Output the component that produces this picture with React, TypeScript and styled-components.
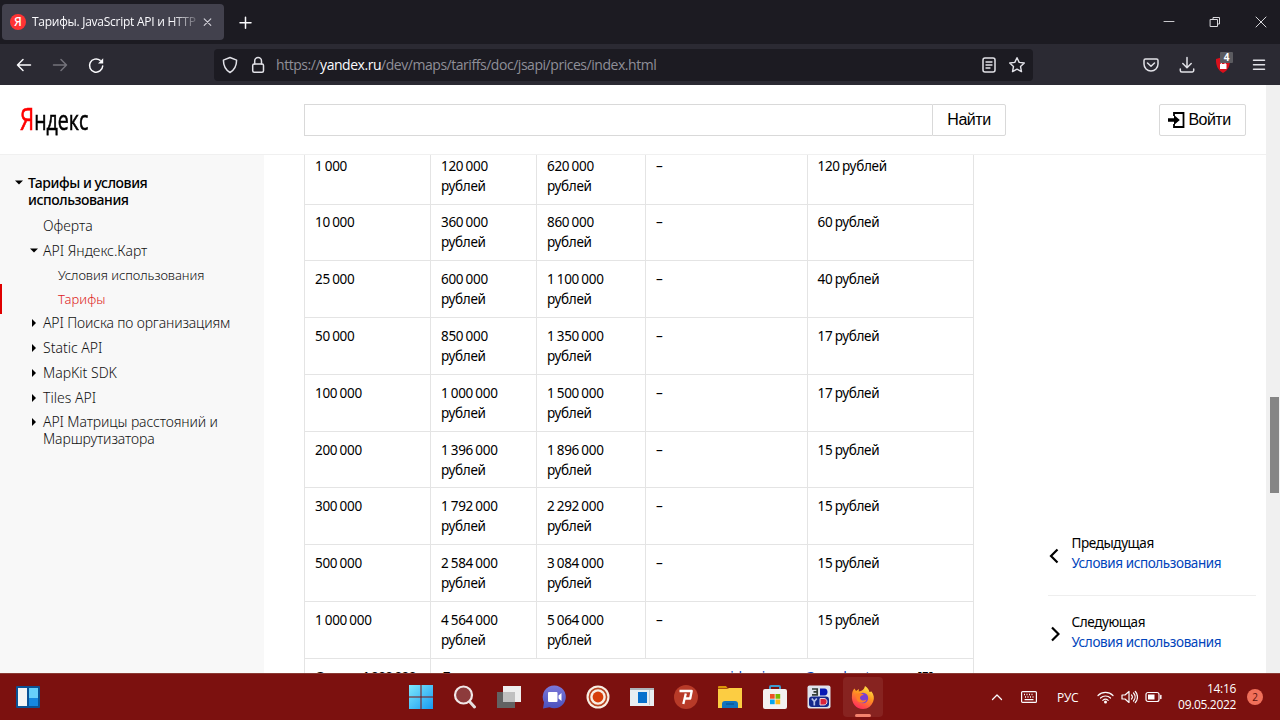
import React from 'react';
import styled, { createGlobalStyle } from 'styled-components';

const Global = createGlobalStyle`
  * { box-sizing: border-box; }
  body { margin: 0; overflow: hidden; background: #fff; font-family: "Noto Sans", "Open Sans", sans-serif; }
  svg { display: block; flex: none; }
`;

const Screen = styled.div`
  width: 1280px;
  height: 720px;
  display: flex;
  flex-direction: column;
  overflow: hidden;
`;

/* Browser chrome */
const TabStrip = styled.div`
  height: 44px;
  flex: none;
  background: #1c1b22;
  display: flex;
  align-items: center;
  padding-left: 2px;
  color: #fbfbfe;
`;
const Tab = styled.div`
  width: 222px;
  height: 36px;
  border-radius: 4px;
  background: #42414d;
  display: flex;
  align-items: center;
  padding: 0 10px 0 8px;
`;
const Favicon = styled.div`
  width: 16px;
  height: 16px;
  border-radius: 50%;
  background: #f33;
  color: #fff;
  font: 500 12px/16px "Noto Sans", sans-serif;
  text-align: center;
  flex: none;
`;
const TabTitle = styled.div`
  width: 166px;
  margin: 0 4px 0 6px;
  overflow: hidden;
  white-space: nowrap;
  font: 400 12px/18px "Open Sans", sans-serif;
  letter-spacing: -0.26px;
  mask-image: linear-gradient(to right, #000 84%, rgba(0, 0, 0, 0.15) 100%);
`;
const NewTab = styled.div`
  margin-left: 15px;
`;
const WindowButtons = styled.div`
  margin-left: auto;
  display: flex;
  gap: 34px;
  padding-right: 13px;
`;
const NavBar = styled.div`
  height: 41px;
  flex: none;
  background: #2b2a33;
  display: flex;
  align-items: center;
  padding-left: 15px;
`;
const NavButtons = styled.div`
  display: flex;
  gap: 18px;
  width: 199px;
`;
const AddressBar = styled.div`
  width: 819px;
  height: 32px;
  border-radius: 4px;
  background: #1c1b22;
  display: flex;
  align-items: center;
  padding: 0 7px 0 7px;
  gap: 10px;
`;
const Url = styled.div`
  flex: 1;
  margin-left: -1px;
  font: 400 14px/20px "Open Sans", sans-serif;
  letter-spacing: -0.46px;
  color: #8f8f98;
  white-space: nowrap;
  b { font-weight: 400; color: #fbfbfe; }
`;
const ToolButtons = styled.div`
  margin-left: auto;
  display: flex;
  align-items: center;
  gap: 18px;
  padding-right: 12px;
`;
const Blocker = styled.div`
  position: relative;
  width: 18px;
  height: 18px;
`;
const BlockerCount = styled.span`
  position: absolute;
  left: 6px;
  top: -4px;
  width: 13px;
  height: 11px;
  border-radius: 1px;
  background: #5b5b60;
  color: #fff;
  font: 700 10px/11px "Open Sans", sans-serif;
  text-align: center;
`;

/* Page */
const Viewport = styled.div`
  height: 588px;
  flex: none;
  display: flex;
  overflow: hidden;
`;
const Page = styled.div`
  width: 1266px;
  height: 588px;
  display: flex;
  flex-direction: column;
`;
const ScrollTrack = styled.div`
  width: 14px;
  background: #f0f0f0;
  padding: 312px 0 0 4px;
`;
const ScrollThumb = styled.div`
  width: 9px;
  height: 96px;
  background: #858585;
`;
const Header = styled.header`
  height: 70px;
  flex: none;
  border-bottom: 1px solid #f0f0f0;
  display: flex;
  align-items: center;
`;
const LogoBox = styled.div`
  width: 304px;
  padding: 0 0 2px 20px;
`;
const Logo = styled.div`
  display: inline-block;
  font: 400 27px/34px "Open Sans", sans-serif;
  transform: scaleX(0.725);
  transform-origin: left center;
  color: #000;
  -webkit-text-stroke: 0.6px currentColor;
  span { color: #f00; font-size: 31px; }
`;
const SearchInput = styled.div`
  width: 628px;
  height: 32px;
  border: 1px solid #d9d9d9;
  border-right: 0;
`;
const SearchButton = styled.div`
  width: 74px;
  height: 32px;
  border: 1px solid #d9d9d9;
  border-radius: 0 2px 2px 0;
  font: 400 16px/29px "Liberation Sans", sans-serif;
  letter-spacing: -0.45px;
  text-align: center;
`;
const Login = styled.div`
  width: 87px;
  height: 32px;
  margin-left: 153px;
  border: 1px solid #d9d9d9;
  border-radius: 2px;
  display: flex;
  align-items: center;
  gap: 3.5px;
  padding: 0 0 0 8px;
  font: 400 16px/29px "Liberation Sans", sans-serif;
  letter-spacing: -0.55px;
`;
const Main = styled.div`
  flex: 1;
  min-height: 0;
  display: flex;
  overflow: hidden;
`;
const Sidebar = styled.nav`
  width: 264px;
  background: #f8f8f8;
  padding-top: 18.5px;
`;
const NavItem = styled.div<{ $level: number; $h: number; $spacing?: number; $active?: boolean; $bold?: boolean }>`
  display: flex;
  height: ${p => p.$h}px;
  padding-left: ${p => 15 + p.$level * 15 - (p.$active ? 2 : 0)}px;
  border-left: ${p => (p.$active ? '2px solid #e00000' : '0')};
  font-size: ${p => (p.$level === 2 ? 13 : 14)}px;
  font-weight: ${p => (p.$bold ? 500 : 300)};
  line-height: 17px;
  letter-spacing: ${p => p.$spacing ?? 0}px;
  color: ${p => (p.$active ? '#d22' : p.$bold ? '#000' : '#111')};
  white-space: pre;
  align-items: ${p => (p.$active ? 'center' : 'flex-start')};
`;
const Marker = styled.span`
  width: 13px;
  flex: none;
  padding: 5px 0 0 0;
`;
const Content = styled.main`
  width: 670px;
  margin-left: 40px;
`;
const Row = styled.div<{ $wide?: boolean }>`
  display: grid;
  grid-template-columns: ${p => (p.$wide ? '126px 543px' : '126px 106px 109px 161.5px 166.5px')};
  width: 670px;
  height: 56.8px;
  border-left: 1px solid #e4e4e4;
`;
const Cell = styled.div<{ $spacing?: number; $bold?: boolean }>`
  border-right: 1px solid #e4e4e4;
  border-bottom: 1px solid #e4e4e4;
  padding: ${p => (p.$bold ? 8.5 : 7.9)}px 0 0 10px;
  font-size: 13.5px;
  font-weight: ${p => (p.$bold ? 600 : 400)};
  line-height: 20px;
  letter-spacing: ${p => p.$spacing ?? -0.3}px;
  word-spacing: -0.9px;
  white-space: pre-line;
  color: #000;
`;
const Table = styled.div`
  margin-top: -7.3px;
`;
const MailLink = styled.span`
  color: #04b;
  margin-left: 4px;
  font-weight: 400;
  letter-spacing: -0.1px;
`;
const Pager = styled.aside`
  margin: 377.5px 0 0 74px;
  width: 208px;
`;
const PagerItem = styled.div`
  height: 62.5px;
  display: flex;
  align-items: flex-start;
  font-size: 13.5px;
  line-height: 20px;
  letter-spacing: -0.4px;
  white-space: nowrap;
  svg { margin-top: 15px; }
  & + & { border-top: 1px solid #eee; padding-top: 15.5px; height: 80px; }
  & + & svg { margin-top: 14.5px; }
`;
const PagerText = styled.div`
  margin-left: 11.5px;
  a { display: block; color: #04b; }
`;

/* Taskbar */
const Taskbar = styled.div`
  height: 47px;
  background: #7c110f;
  border-top: 1px solid #8a3a33;
  display: flex;
  align-items: center;
  color: #fff;
`;
const Widgets = styled.div`
  width: 401px;
  padding-left: 16px;
`;
const Apps = styled.div`
  display: flex;
  gap: 4.2px;
`;
const TaskButton = styled.div<{ $active?: boolean }>`
  position: relative;
  width: 40px;
  height: 40px;
  display: flex;
  align-items: center;
  justify-content: center;
  border-radius: 4px;
  background: ${p => (p.$active ? '#872320' : 'transparent')};
  &::after {
    content: '';
    display: ${p => (p.$active ? 'block' : 'none')};
    position: absolute;
    bottom: 0;
    left: 12px;
    width: 16px;
    height: 3px;
    border-radius: 2px;
    background: #f4826e;
  }
`;
const Tray = styled.div`
  margin-left: auto;
  display: flex;
  align-items: center;
  padding-right: 17px;
  font: 400 12px/16px "Open Sans", sans-serif;
`;
const Keyboard = styled.div`
  margin-left: 18px;
`;
const Lang = styled.span`
  margin: 1px 18px 0 20px;
  width: 22px;
  font-size: 12px;
  letter-spacing: -0.3px;
`;
const Clock = styled.div`
  width: 74px;
  text-align: right;
  letter-spacing: -0.33px;
`;
const Status = styled.div`
  display: flex;
  gap: 7px;
`;
const Notice = styled.div`
  width: 16px;
  height: 16px;
  margin-left: 11px;
  border-radius: 50%;
  background: #f0705a;
  color: #5a0f0c;
  font-size: 10px;
  text-align: center;
`;

const line = { fill: 'none', stroke: '#fbfbfe', strokeWidth: 1.5, strokeLinecap: 'round' as const, strokeLinejoin: 'round' as const };

const rows: [string, string, string, string][] = [
  ['1 000', '120 000', '620 000', '120'],
  ['10 000', '360 000', '860 000', '60'],
  ['25 000', '600 000', '1 100 000', '40'],
  ['50 000', '850 000', '1 350 000', '17'],
  ['100 000', '1 000 000', '1 500 000', '17'],
  ['200 000', '1 396 000', '1 896 000', '15'],
  ['300 000', '1 792 000', '2 292 000', '15'],
  ['500 000', '2 584 000', '3 084 000', '15'],
  ['1 000 000', '4 564 000', '5 064 000', '15'],
];

const Down = () => <svg width="8" height="8"><path d="M0 1.500h8L4 5.500z" fill="#000" /></svg>;
const Right = () => <svg width="8" height="8"><path d="M2 0v8l4-4z" fill="#000" /></svg>;

export default function App() {
  return (
    <Screen>
      <Global />
      <TabStrip>
        <Tab>
          <Favicon>Я</Favicon>
          <TabTitle>Тарифы. JavaScript API и HTTP</TabTitle>
          <svg width="12" height="12"><path d="M2.200 2.800l6.600 6.600m0-6.600l-6.600 6.600" {...line} stroke="#d5d4dc" strokeWidth="1.100" /></svg>
        </Tab>
        <NewTab><svg width="13" height="13"><path d="M6.500 1.200v11M1 6.700h11" {...line} /></svg></NewTab>
        <WindowButtons>
          <svg width="12" height="12"><path d="M1 5.500h10" {...line} stroke="#c8c8cc" strokeWidth="1" /></svg>
          <svg width="12" height="12"><path d="M1.500 3.500h7v7h-7zM4 3.200V1.500h6.500V8H9" {...line} stroke="#d8d8dc" strokeWidth="1" /></svg>
          <svg width="12" height="12"><path d="M1 1l10 10m0-10L1 11" {...line} stroke="#d8d8dc" strokeWidth="1" /></svg>
        </WindowButtons>
      </TabStrip>

      <NavBar>
        <NavButtons>
          <svg width="18" height="18"><path d="M15.500 9h-13M8 3.500L2.500 9 8 14.500" {...line} /></svg>
          <svg width="18" height="18"><path d="M2.500 9h13M10 3.500L15.500 9 10 14.500" {...line} stroke="#74737b" /></svg>
          <svg width="18" height="18"><path d="M15.700 10A6.600 6.600 0 1 1 13.200 4.400" {...line} /><path d="M16.200 2.200v5.200H11z" fill="#fbfbfe" /></svg>
        </NavButtons>
        <AddressBar>
          <svg width="18" height="18"><path d="M9 1.500l6.600 2.600c0 5.200-1.500 9.600-6.600 12.400C3.900 13.700 2.400 9.300 2.400 4.100z" {...line} stroke="#e2e2e8" /></svg>
          <svg width="18" height="18"><rect x="3.700" y="8" width="10.800" height="8.200" rx="1.500" {...line} stroke="#e2e2e8" /><path d="M5.700 8V5a3.400 3.400 0 0 1 6.800 0v3" {...line} stroke="#e2e2e8" /></svg>
          <Url>https://<b>yandex.ru</b>/dev/maps/tariffs/doc/jsapi/prices/index.html</Url>
          <svg width="18" height="18"><rect x="3" y="2" width="12" height="14" rx="2" {...line} stroke="#e2e2e8" /><path d="M6 6h6M6 9h6M6 12h4" {...line} stroke="#e2e2e8" strokeWidth="1.300" /></svg>
          <svg width="18" height="18"><path d="M9 1.700l2.200 4.700 5.100.6-3.800 3.500 1 5.100L9 13.100l-4.500 2.500 1-5.100L1.700 7l5.100-.6z" {...line} stroke="#e2e2e8" strokeWidth="1.400" /></svg>
        </AddressBar>
        <ToolButtons>
          <svg width="18" height="18"><path d="M3.500 3h11a1.500 1.500 0 0 1 1.500 1.500V8A7 7 0 0 1 2 8V4.500A1.500 1.500 0 0 1 3.500 3zM5.500 7L9 10.300 12.500 7" {...line} stroke="#e2e2e8" /></svg>
          <svg width="18" height="18"><path d="M9 1.500v10M4.800 7.500L9 11.700l4.200-4.200M2.300 13v1.500a1.500 1.500 0 0 0 1.500 1.500h10.400a1.500 1.500 0 0 0 1.500-1.500V13" {...line} stroke="#e2e2e8" /></svg>
          <Blocker>
            <svg width="18" height="18"><path d="M9 1l7 2c.2 6-1.500 11-7 14C3.500 14 1.800 9 2 3z" fill="#d9101c" /><rect x="6" y="8" width="6.500" height="5" fill="#fff" /><path d="M7.300 8V6.500a1.900 1.900 0 0 1 3.800 0V8" stroke="#fff" fill="none" /></svg>
            <BlockerCount>4</BlockerCount>
          </Blocker>
          <svg width="18" height="18"><path d="M3.500 4.200h11M3.500 8.700h11M3.500 13.200h11" {...line} stroke="#e2e2e8" /></svg>
        </ToolButtons>
      </NavBar>

      <Viewport>
        <Page>
          <Header>
            <LogoBox><Logo><span>Я</span>ндекс</Logo></LogoBox>
            <SearchInput />
            <SearchButton>Найти</SearchButton>
            <Login>
              <svg width="17" height="16"><path d="M6 4V1h9.500v14H6v-3" fill="none" stroke="#000" strokeWidth="1.800" /><path d="M0 6.200h6V3l5.800 5L6 13V9.800H0z" fill="#000" /></svg>
              Войти
            </Login>
          </Header>
          <Main>
            <Sidebar>
              <NavItem $level={0} $h={43.5} $bold $spacing={-0.45}><Marker><Down /></Marker>{'Тарифы и условия\nиспользования'}</NavItem>
              <NavItem $level={1} $h={24.5}><Marker />Оферта</NavItem>
              <NavItem $level={1} $h={25}><Marker><Down /></Marker>API Яндекс.Карт</NavItem>
              <NavItem $level={2} $h={17.5} $spacing={-0.04}><Marker />Условия использования</NavItem>
              <NavItem $level={2} $h={30} $active $spacing={0.1}><Marker />Тарифы</NavItem>
              <NavItem $level={1} $h={25.2} $spacing={-0.14}><Marker><Right /></Marker>API Поиска по организациям</NavItem>
              <NavItem $level={1} $h={24.6}><Marker><Right /></Marker>Static API</NavItem>
              <NavItem $level={1} $h={24.8}><Marker><Right /></Marker>MapKit SDK</NavItem>
              <NavItem $level={1} $h={24.8}><Marker><Right /></Marker>Tiles API</NavItem>
              <NavItem $level={1} $h={40} $spacing={-0.1}><Marker><Right /></Marker>{'API Матрицы расстояний и\nМаршрутизатора'}</NavItem>
            </Sidebar>
            <Content>
              <Table>
                {rows.map(([n, a, b, c]) => (
                  <Row key={n}>
                    <Cell>{n}</Cell>
                    <Cell>{a + '\nрублей'}</Cell>
                    <Cell>{b + '\nрублей'}</Cell>
                    <Cell>–</Cell>
                    <Cell>{c + ' рублей'}</Cell>
                  </Row>
                ))}
                <Row $wide>
                  <Cell $bold $spacing={-0.6}>Свыше 1 000 000</Cell>
                  <Cell $bold $spacing={-0.25}>Для расчета стоимости напишите нам на<MailLink>paid-api-maps@yandex-team.ru</MailLink> [5]</Cell>
                </Row>
              </Table>
            </Content>
            <Pager>
              <PagerItem>
                <svg width="12" height="16"><path d="M9.500 1.500L3 8l6.500 6.500" fill="none" stroke="#000" strokeWidth="2.200" /></svg>
                <PagerText>Предыдущая<a>Условия использования</a></PagerText>
              </PagerItem>
              <PagerItem>
                <svg width="12" height="16"><path d="M4 1.500L10.500 8 4 14.500" fill="none" stroke="#000" strokeWidth="2.200" /></svg>
                <PagerText>Следующая<a>Условия использования</a></PagerText>
              </PagerItem>
            </Pager>
          </Main>
        </Page>
        <ScrollTrack><ScrollThumb /></ScrollTrack>
      </Viewport>

      <Taskbar>
        <Widgets>
          <svg width="24" height="22"><rect width="24" height="22" rx="1" fill="#0a5295" /><rect x="2" y="2" width="9" height="18" fill="#f4f4f4" /><rect x="13" y="2" width="9" height="10" fill="#67d0fb" /><rect x="13" y="12" width="9" height="8" fill="#1688e0" /></svg>
        </Widgets>
        <Apps>
          <TaskButton>
            <svg width="24" height="24"><defs><linearGradient id="win" x1="0" y1="0" x2="24" y2="24" gradientUnits="userSpaceOnUse"><stop stopColor="#7fe9fd" /><stop offset="1" stopColor="#179af0" /></linearGradient></defs><path d="M0 0h11.500v11.500H0zM12.500 0H24v11.500H12.500zM0 12.500h11.500V24H0zM12.500 12.500H24V24H12.500z" fill="url(#win)" /></svg>
          </TaskButton>
          <TaskButton>
            <svg width="24" height="24"><path d="M16.500 16.500L21.500 22" stroke="#e4dede" strokeWidth="3" strokeLinecap="round" /><circle cx="10.500" cy="10" r="8.500" fill="#8d3b3c" stroke="#f1e8e8" strokeWidth="2.200" /></svg>
          </TaskButton>
          <TaskButton>
            <svg width="26" height="24"><rect x="1" y="7" width="18" height="16" fill="#626262" /><rect x="7" y="1" width="18" height="16" fill="#eee" /><rect x="7" y="7" width="12" height="10" fill="#c0c0c0" /></svg>
          </TaskButton>
          <TaskButton>
            <svg width="24" height="24"><defs><linearGradient id="chat" x1="0" y1="0" x2="0" y2="1"><stop stopColor="#7b78d8" /><stop offset="1" stopColor="#4a51bd" /></linearGradient></defs><path d="M12.500.500a11.400 11.400 0 1 1-5 21.700L1 23.500l1-6.300A11.400 11.400 0 0 1 12.500.500z" fill="url(#chat)" /><rect x="6" y="7" width="9.500" height="10" rx="1" fill="#fff" /><path d="M16.500 10.500l3-2.500v8l-3-2.500z" fill="#fff" /></svg>
          </TaskButton>
          <TaskButton>
            <svg width="24" height="24"><circle cx="12" cy="12" r="11.500" fill="#f8eee4" /><circle cx="12" cy="12" r="8.600" fill="none" stroke="#b8431f" strokeWidth="1.600" /><circle cx="12" cy="12" r="5.400" fill="#d63e0a" /></svg>
          </TaskButton>
          <TaskButton>
            <svg width="26" height="20"><rect x="1" y="1" width="24" height="18" fill="#e9eef2" /><rect x="1" y="1" width="24" height="2" fill="#aeb4ba" /><rect x="9" y="5" width="9" height="11" fill="#0870cc" /><path d="M20.500 3v15" stroke="#c4ccd3" /></svg>
          </TaskButton>
          <TaskButton>
            <svg width="24" height="24"><circle cx="12" cy="12" r="12" fill="#b83a28" /><path d="M5.500 6H17.700l-1.500 7.500H10.500M11.800 8.500L9.300 19" fill="none" stroke="#fff" strokeWidth="2.300" strokeLinejoin="round" /></svg>
          </TaskButton>
          <TaskButton>
            <svg width="26" height="24"><path d="M1 2a1 1 0 0 1 1-1h7l2 2.500H1z" fill="#dc9608" /><path d="M1 4h9l2-1h13v20H1z" fill="#fccd42" /><path d="M5 23v-4a3 3 0 0 1 3-3h10a3 3 0 0 1 3 3v4z" fill="#1173be" /><path d="M9 19h8" stroke="#0b5898" strokeWidth="1.500" /></svg>
          </TaskButton>
          <TaskButton>
            <svg width="24" height="24"><path d="M7 5V2a1 1 0 0 1 1-1h8a1 1 0 0 1 1 1v3" fill="none" stroke="#3e9bd0" strokeWidth="2" /><rect x="0" y="4" width="24" height="20" rx="2" fill="#f3f1f1" /><path d="M7 9h4.700v4.700H7z" fill="#ef5125" /><path d="M12.500 9h4.700v4.700h-4.700z" fill="#7db700" /><path d="M7 14.500h4.700v4.700H7z" fill="#06a5ee" /><path d="M12.500 14.500h4.700v4.700h-4.700z" fill="#fdb813" /></svg>
          </TaskButton>
          <TaskButton>
            <svg width="24" height="24"><rect x=".500" y=".500" width="23" height="23" rx="2" fill="#dfe3ec" /><rect x="2" y="11.500" width="20" height="10.500" rx="3" fill="#14288c" /><path d="M5 4h5.200v5.800H5M6.500 6.900h3.500" fill="none" stroke="#323c36" strokeWidth="1.700" /><path d="M13 3.500h4.500c4 0 4 7 0 7H13z" fill="#0718b4" /><path d="M4.800 13.500l2.500 3 2.500-3M7.300 16.500v4" fill="none" stroke="#b7c2e7" strokeWidth="1.700" /><path d="M13 13.500h4c4 0 4 6.500 0 6.500h-4z" fill="#da2339" stroke="#f0d8df" /></svg>
          </TaskButton>
          <TaskButton $active>
            <svg width="24" height="24"><defs><linearGradient id="fx" x1=".8" y1="0" x2=".3" y2="1"><stop stopColor="#fff04b" /><stop offset=".45" stopColor="#ff9420" /><stop offset="1" stopColor="#ff295f" /></linearGradient></defs><path d="M1 10c0-3 1-5 2.500-6.500L5 6l3-2-.3 2.500C11 6 13 5 14 1c3 2 4 4 4.500 6l2-.5c2.500 3 3 7 1.700 10C20.500 21 17 24 12 24 5 24 0 18 1 10z" fill="url(#fx)" /><circle cx="12" cy="13" r="5.200" fill="#7b3fd2" /><path d="M5 9c3-1 6-1 8 1-3 0-4 1.500-4 3 0 2.500 4 3.500 6.500 1.500C14 19 7 19 5.500 14z" fill="#ff8025" /></svg>
          </TaskButton>
        </Apps>
        <Tray>
          <svg width="12" height="12"><path d="M1.500 8.500L6 4l4.500 4.500" {...line} strokeWidth="1.300" /></svg>
          <Keyboard>
            <svg width="16" height="12"><rect x=".6" y=".6" width="14.800" height="10.800" rx="1" {...line} strokeWidth="1.200" /><path d="M3 3.500h10M4 6h9" {...line} strokeWidth="1.300" strokeDasharray="1 1.500" strokeLinecap="butt" /><path d="M4 8.700h8" {...line} strokeWidth="1.200" /></svg>
          </Keyboard>
          <Lang>РУС</Lang>
          <Status>
            <svg width="17" height="16"><path d="M1 6.500a10.700 10.700 0 0 1 15 0M3.500 9a7.200 7.200 0 0 1 10 0M5.800 11.400a4 4 0 0 1 5.400 0" {...line} strokeWidth="1.200" /><circle cx="8.500" cy="13" r="1.500" fill="#fff" /></svg>
            <svg width="17" height="16"><path d="M1 6h3l4-3.500v11L4 10H1zM10.500 6a3 3 0 0 1 0 4M12.500 4a6 6 0 0 1 0 8M14.300 2.500a8 8 0 0 1 0 11" {...line} strokeWidth="1.200" /></svg>
            <svg width="17" height="16"><rect x="1" y="3.500" width="13" height="9" rx="2" {...line} strokeWidth="1.200" /><rect x="3" y="5.500" width="6.500" height="5" fill="#fff" /><path d="M15.800 6.500v3" {...line} /></svg>
          </Status>
          <Clock>14:16<br />09.05.2022</Clock>
          <Notice>2</Notice>
        </Tray>
      </Taskbar>
    </Screen>
  );
}
